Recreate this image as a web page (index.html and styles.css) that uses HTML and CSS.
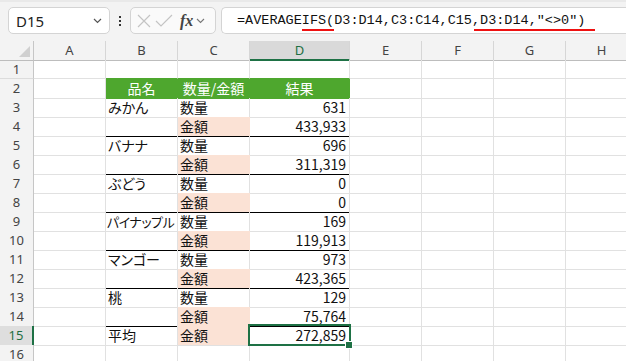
FILE: index.html
```html
<!DOCTYPE html>
<html lang="ja">
<head>
  <meta charset="UTF-8">
  <title>AVERAGEIFS</title>
  <link rel="stylesheet" href="styles.css">
</head>
<body>
  <!-- formula bar -->
  <div class="toolbar">
    <div class="namebox">
      <span>D15</span>
      <svg class="chev" width="9" height="6" viewBox="0 0 9 6"><path d="M1 1l3.5 3.5L8 1" fill="none" stroke="#555" stroke-width="1.2"/></svg>
    </div>
    <div class="dots"><i></i><i></i><i></i></div>
    <div class="fxbox">
      <svg width="14" height="14" viewBox="0 0 14 14"><path d="M1 1l12 12M13 1L1 13" stroke="#c4c4c4" stroke-width="1.2"/></svg>
      <svg width="18" height="14" viewBox="0 0 18 14"><path d="M1 7l5 5L17 1" fill="none" stroke="#c4c4c4" stroke-width="1.2"/></svg>
      <span class="fx">fx</span>
      <svg width="9" height="6" viewBox="0 0 9 6"><path d="M1 1l3.5 3.5L8 1" fill="none" stroke="#777" stroke-width="1.1"/></svg>
    </div>
    <div class="formula">=AVERAGE<span class="mark">IFS(</span>D3:D14,C3:C14,C15,<span class="mark wide">D3:D14,"&lt;&gt;0")</span></div>
  </div>

  <!-- sheet -->
  <div class="sheet">
    <div class="row head">
      <div class="rh corner"></div>
      <div class="ch">A</div><div class="ch">B</div><div class="ch">C</div><div class="ch active">D</div>
      <div class="ch">E</div><div class="ch">F</div><div class="ch">G</div><div class="ch">H</div>
    </div>
    <div class="row">
      <div class="rh">1</div>
      <div class="c"></div><div class="c g-top"></div><div class="c g-top"></div><div class="c g-top"></div>
      <div class="c"></div><div class="c"></div><div class="c"></div><div class="c"></div>
    </div>
    <div class="row">
      <div class="rh">2</div>
      <div class="c"></div><div class="c green">品名</div><div class="c green">数量/金額</div><div class="c green">結果</div>
      <div class="c"></div><div class="c"></div><div class="c"></div><div class="c"></div>
    </div>
    <div class="row">
      <div class="rh">3</div>
      <div class="c"></div><div class="c">みかん</div><div class="c">数量</div><div class="c num">631</div>
      <div class="c"></div><div class="c"></div><div class="c"></div><div class="c"></div>
    </div>
    <div class="row">
      <div class="rh">4</div>
      <div class="c"></div><div class="c line"></div><div class="c line pink">金額</div><div class="c line num">433,933</div>
      <div class="c"></div><div class="c"></div><div class="c"></div><div class="c"></div>
    </div>
    <div class="row">
      <div class="rh">5</div>
      <div class="c"></div><div class="c">バナナ</div><div class="c">数量</div><div class="c num">696</div>
      <div class="c"></div><div class="c"></div><div class="c"></div><div class="c"></div>
    </div>
    <div class="row">
      <div class="rh">6</div>
      <div class="c"></div><div class="c line"></div><div class="c line pink">金額</div><div class="c line num">311,319</div>
      <div class="c"></div><div class="c"></div><div class="c"></div><div class="c"></div>
    </div>
    <div class="row">
      <div class="rh">7</div>
      <div class="c"></div><div class="c">ぶどう</div><div class="c">数量</div><div class="c num">0</div>
      <div class="c"></div><div class="c"></div><div class="c"></div><div class="c"></div>
    </div>
    <div class="row">
      <div class="rh">8</div>
      <div class="c"></div><div class="c line"></div><div class="c line pink">金額</div><div class="c line num">0</div>
      <div class="c"></div><div class="c"></div><div class="c"></div><div class="c"></div>
    </div>
    <div class="row">
      <div class="rh">9</div>
      <div class="c"></div><div class="c tight">パイナップル</div><div class="c">数量</div><div class="c num">169</div>
      <div class="c"></div><div class="c"></div><div class="c"></div><div class="c"></div>
    </div>
    <div class="row">
      <div class="rh">10</div>
      <div class="c"></div><div class="c line"></div><div class="c line pink">金額</div><div class="c line num">119,913</div>
      <div class="c"></div><div class="c"></div><div class="c"></div><div class="c"></div>
    </div>
    <div class="row">
      <div class="rh">11</div>
      <div class="c"></div><div class="c">マンゴー</div><div class="c">数量</div><div class="c num">973</div>
      <div class="c"></div><div class="c"></div><div class="c"></div><div class="c"></div>
    </div>
    <div class="row">
      <div class="rh">12</div>
      <div class="c"></div><div class="c line"></div><div class="c line pink">金額</div><div class="c line num">423,365</div>
      <div class="c"></div><div class="c"></div><div class="c"></div><div class="c"></div>
    </div>
    <div class="row">
      <div class="rh">13</div>
      <div class="c"></div><div class="c">桃</div><div class="c">数量</div><div class="c num">129</div>
      <div class="c"></div><div class="c"></div><div class="c"></div><div class="c"></div>
    </div>
    <div class="row">
      <div class="rh">14</div>
      <div class="c"></div><div class="c line"></div><div class="c line pink">金額</div><div class="c line num">75,764</div>
      <div class="c"></div><div class="c"></div><div class="c"></div><div class="c"></div>
    </div>
    <div class="row">
      <div class="rh active">15</div>
      <div class="c"></div><div class="c">平均</div><div class="c pink">金額</div><div class="c num selected">272,859</div>
      <div class="c"></div><div class="c"></div><div class="c"></div><div class="c"></div>
    </div>
    <div class="row">
      <div class="rh">16</div>
      <div class="c"></div><div class="c"></div><div class="c"></div><div class="c"></div>
      <div class="c"></div><div class="c"></div><div class="c"></div><div class="c"></div>
    </div>
  </div>
</body>
</html>
```

FILE: styles.css
```css
* {
  box-sizing: border-box;
}
body {
  margin: 0;
  background: #ffffff;
  font-family: "Noto Sans", "Noto Sans CJK JP", sans-serif;
  overflow: hidden;
}
.toolbar {
  height: 41px;
  display: flex;
  align-items: flex-start;
  padding: 5px 0 0 8px;
  background: #f3f3f3;
  border-top: 2px solid #e9e9e9;
  white-space: nowrap;
}
.toolbar > * {
  flex-shrink: 0;
}
.namebox {
  width: 102px;
  height: 27px;
  background: #fff;
  border: 1px solid #d4d4d4;
  border-radius: 5px;
  display: flex;
  align-items: center;
  justify-content: space-between;
  padding: 0 7px;
  font-size: 15px;
  color: #222;
}
.namebox .chev {
  margin-top: 1px;
}
.dots {
  width: 20px;
  height: 27px;
  display: flex;
  flex-direction: column;
  align-items: center;
  justify-content: center;
  gap: 2px;
}
.dots i {
  width: 2px;
  height: 2px;
  background: #333;
}
.fxbox {
  width: 86px;
  height: 27px;
  background: #fafafa;
  border: 1px solid #d4d4d4;
  border-radius: 5px;
  display: flex;
  align-items: center;
  padding-left: 6px;
  gap: 4px;
}
.fxbox .fx {
  font-family: "Liberation Serif", serif;
  font-style: italic;
  font-weight: bold;
  font-size: 16px;
  color: #444;
  margin-left: 3px;
  margin-right: -1px;
}
.formula {
  margin-left: 5px;
  flex: 1 0 auto;
  height: 27px;
  background: #fff;
  border: 1px solid #d4d4d4;
  border-right: none;
  border-radius: 5px 0 0 5px;
  padding-left: 15px;
  font-family: "Liberation Mono", monospace;
  font-size: 13.5px;
  line-height: 25px;
  color: #111;
}
.mark {
  position: relative;
}
.mark::after {
  content: "";
  position: absolute;
  left: 0;
  right: 0;
  bottom: -3px;
  height: 2px;
  background: #ee1111;
}
.mark.wide::after {
  left: -6px;
  right: -10px;
}

.row {
  display: grid;
  grid-template-columns: 34px 72px 72px 72px 100px 72px 72px 72px 72px;
  height: 19px;
}
.rh {
  background: #f3f3f3;
  border-right: 1px solid #c6c6c6;
  border-bottom: 1px solid #dcdcdc;
  font-size: 13px;
  color: #444;
  text-align: center;
  line-height: 18px;
}
.rh.active {
  background: #dedede;
  color: #1e6f42;
  border-right: 2px solid #1e7145;
}
.corner {
  position: relative;
  border-bottom: 1px solid #bdbdbd;
}
.corner::after {
  content: "";
  position: absolute;
  right: 3px;
  bottom: 3px;
  border-left: 11px solid transparent;
  border-bottom: 11px solid #d0d0d0;
}
.ch {
  background: #f3f3f3;
  border-right: 1px solid #d6d6d6;
  border-bottom: 1px solid #bdbdbd;
  text-align: center;
  font-size: 13px;
  line-height: 18px;
  color: #444;
}
.ch.active {
  background: #d9d9d9;
  color: #1e6f42;
  border-bottom: 2px solid #1e7145;
}
.c {
  border-right: 1px solid #e1e1e1;
  border-bottom: 1px solid #e1e1e1;
  font-family: "Noto Sans CJK JP", sans-serif;
  font-feature-settings: "palt";
  font-size: 14px;
  line-height: 19px;
  padding: 0 2px;
  color: #111;
  white-space: nowrap;
}
.c.tight {
  font-size: 13px;
  letter-spacing: -0.5px;
  padding-left: 1px;
}
.c.num {
  text-align: right;
  padding-right: 3px;
}
.c.g-top {
  border-bottom-color: #4ea72e;
}
.c.green {
  background: #4ea72e;
  border-color: #4ea72e;
  color: #fff;
  text-align: center;
}
.c.pink {
  background: #fbe2d5;
  border-right-color: #fbe2d5;
}
.c.line {
  border-bottom-color: #000;
}
.c.selected {
  position: relative;
  z-index: 2;
}
.c.selected::after {
  content: "";
  position: absolute;
  left: -2px;
  top: -2px;
  right: -2px;
  bottom: -1px;
  border: 2px solid #1e7145;
}
.c.selected::before {
  content: "";
  position: absolute;
  right: -4px;
  bottom: -4px;
  width: 6px;
  height: 6px;
  background: #1e7145;
  border: 1px solid #fff;
  z-index: 3;
}
```
